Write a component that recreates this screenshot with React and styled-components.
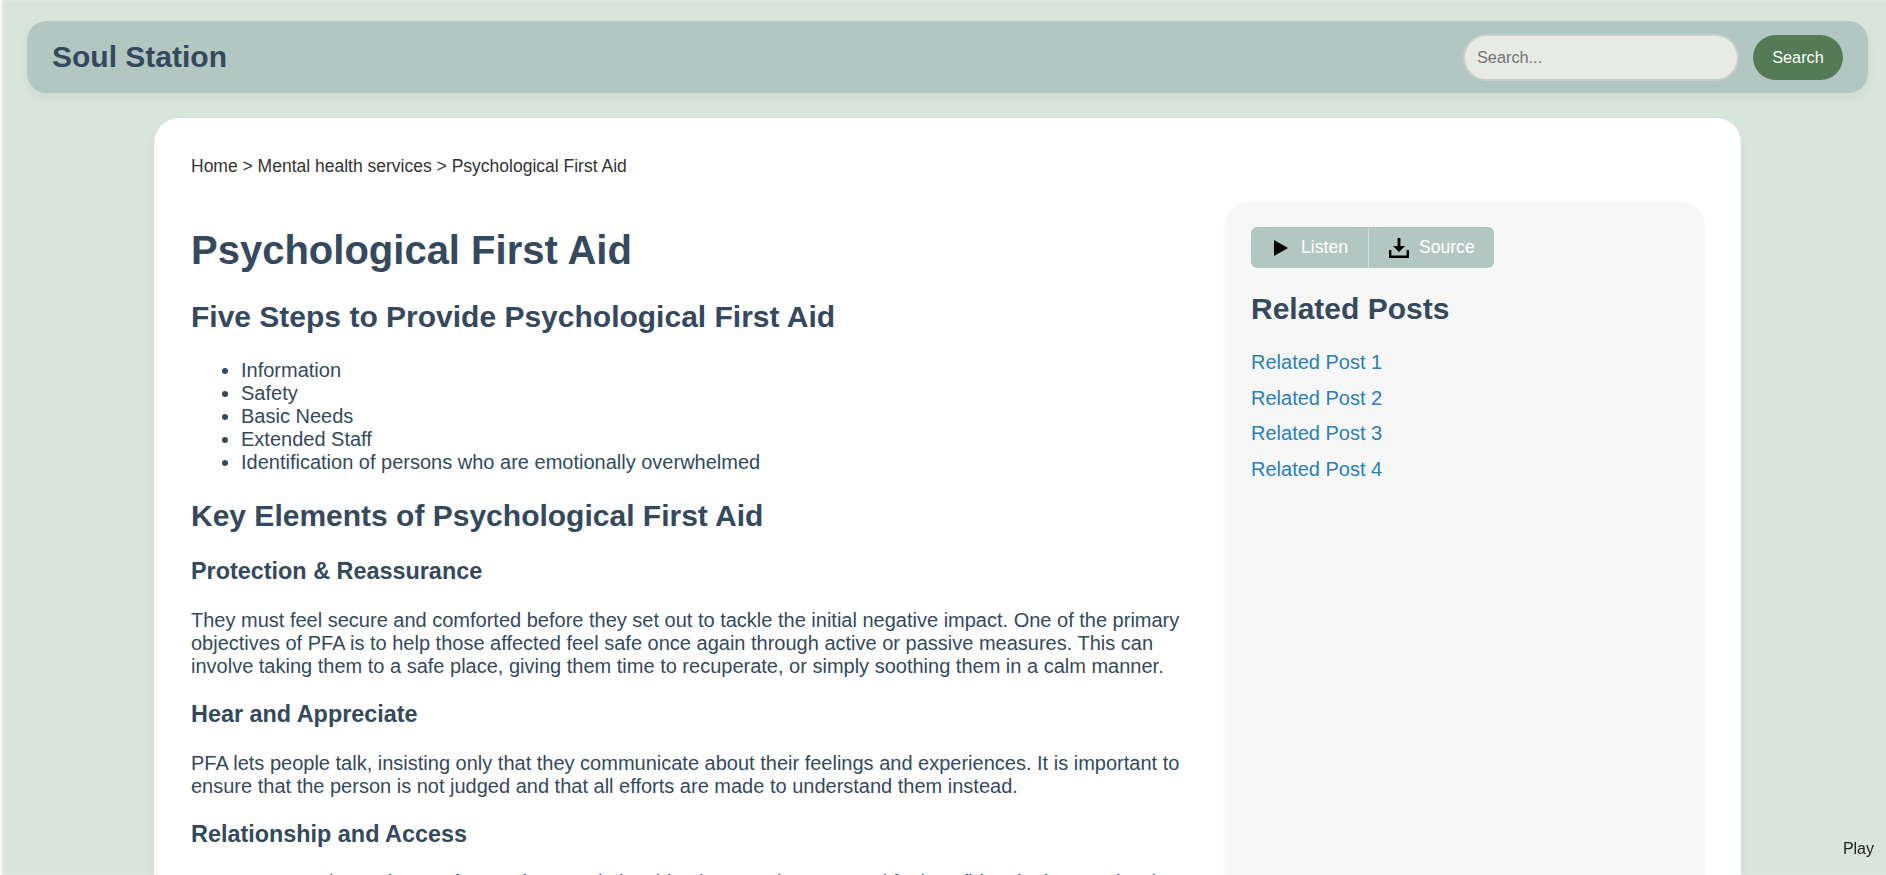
import styled, { createGlobalStyle } from "styled-components";

const GlobalStyle = createGlobalStyle`
  html, body {
    margin: 0;
    padding: 0;
    height: 875px;
    overflow: hidden;
    background: #d8e5dd;
  }
  body {
    font-family: "Liberation Sans", Arial, sans-serif;
    color: #34495e;
  }
`;

const Page = styled.div`
  height: 875px;
  overflow: hidden;
  padding: 21px 18px 0 27px;
  box-sizing: border-box;
  box-shadow: inset 3px 0 3px -1px #fff;
`;

const Navbar = styled.header`
  display: flex;
  align-items: center;
  justify-content: space-between;
  height: 72px;
  padding: 0 25px;
  box-sizing: border-box;
  background: #b2c7c1;
  border-radius: 20px;
  box-shadow: 0 4px 10px rgba(0, 0, 0, 0.06);
`;

const Logo = styled.div`
  font-size: 30px;
  font-weight: 700;
  color: #34495e;
`;

const SearchForm = styled.form`
  display: flex;
  align-items: center;
  gap: 14px;
`;

const SearchInput = styled.input`
  width: 276px;
  height: 47px;
  padding: 0 12px;
  box-sizing: border-box;
  border: 2px solid #c8cfcc;
  border-radius: 24px;
  background: #e8eae5;
  font: 16.3px "Liberation Sans", Arial, sans-serif;
  color: #34495e;
  &::placeholder {
    color: #757575;
  }
`;

const SearchButton = styled.button`
  width: 90px;
  height: 45px;
  border: 0;
  border-radius: 23px;
  background: #557a55;
  color: #fff;
  font: 16.3px "Liberation Sans", Arial, sans-serif;
`;

const Card = styled.main`
  width: 1587px;
  margin: 25px 0 0 127px;
  padding: 37px 36px 40px 37px;
  box-sizing: border-box;
  background: #fff;
  border-radius: 25px;
  box-shadow: 0 4px 10px rgba(0, 0, 0, 0.05);
`;

const Breadcrumb = styled.nav`
  font-size: 17.5px;
  line-height: 22px;
  color: #333;
`;

const Columns = styled.div`
  display: grid;
  grid-template-columns: 1fr 480px;
  column-gap: 30px;
  margin-top: 25px;
`;

const Article = styled.article`
  min-width: 0;
`;

const Title = styled.h1`
  margin: 25px 0 26.8px;
  font-size: 40px;
  line-height: 46px;
  font-weight: 700;
`;

const Section = styled.h2`
  margin: 24.9px 0;
  font-size: 30px;
  line-height: 34.5px;
  font-weight: 700;
`;

const Sub = styled.h3`
  margin: 23.4px 0;
  font-size: 23.4px;
  line-height: 27px;
  font-weight: 700;
`;

const Text = styled.p`
  margin: 20px 0;
  font-size: 20px;
  line-height: 23px;
`;

const Bullets = styled.ul`
  margin: 20px 0;
  padding-left: 50px;
  font-size: 20px;
  line-height: 23px;
`;

const Aside = styled.aside`
  padding: 25px 26px;
  min-height: 900px;
  box-sizing: border-box;
  background: #f7f7f7;
  border-radius: 25px;
  box-shadow: 0 0 6px rgba(0, 0, 0, 0.03);
`;

const ButtonGroup = styled.div`
  display: inline-flex;
  height: 41px;
  background: #b2c7c1;
  border-radius: 6px;
  overflow: hidden;
`;

const GroupButton = styled.button`
  display: flex;
  align-items: center;
  gap: ${(p) => p.$gap}px;
  height: 100%;
  padding: 0 ${(p) => p.$right}px 0 ${(p) => p.$left}px;
  border: 0;
  background: none;
  color: #fff;
  font: 17.6px "Liberation Sans", Arial, sans-serif;
  & + & {
    border-left: 1px solid #cfdcd8;
  }
  svg {
    flex: none;
  }
`;

const RelatedTitle = styled.h2`
  margin: 23px 0 25px;
  font-size: 30px;
  line-height: 35px;
  font-weight: 700;
`;

const RelatedList = styled.ul`
  list-style: none;
  margin: 0;
  padding: 0;
`;

const RelatedItem = styled.li`
  font-size: 20px;
  line-height: 23px;
  margin-bottom: 12.6px;
  a {
    color: #2980b9;
    text-decoration: none;
  }
`;

const PlayLabel = styled.div`
  position: fixed;
  right: 12px;
  bottom: 17px;
  font-size: 16px;
  color: #222;
`;

const PlayIcon = () => (
  <svg width="14" height="16" viewBox="0 0 14 16">
    <path d="M0 0 14 8 0 16z" fill="#000" />
  </svg>
);

const DownloadIcon = () => (
  <svg width="20" height="20" viewBox="0 0 20 20">
    <path d="M8.6 0h2.8v8H16l-6 6-6-6h4.6z" fill="#000" />
    <path d="M1.2 12v6.8h17.6V12" fill="none" stroke="#000" strokeWidth="2.4" />
  </svg>
);

const related = ["Related Post 1", "Related Post 2", "Related Post 3", "Related Post 4"];

export default function App() {
  return (
    <>
      <GlobalStyle />
      <Page>
        <Navbar>
          <Logo>Soul Station</Logo>
          <SearchForm onSubmit={(e) => e.preventDefault()}>
            <SearchInput placeholder="Search..." />
            <SearchButton>Search</SearchButton>
          </SearchForm>
        </Navbar>
        <Card>
          <Breadcrumb>Home &gt; Mental health services &gt; Psychological First Aid</Breadcrumb>
          <Columns>
            <Article>
              <Title>Psychological First Aid</Title>
              <Section>Five Steps to Provide Psychological First Aid</Section>
              <Bullets>
                <li>Information</li>
                <li>Safety</li>
                <li>Basic Needs</li>
                <li>Extended Staff</li>
                <li>Identification of persons who are emotionally overwhelmed</li>
              </Bullets>
              <Section>Key Elements of Psychological First Aid</Section>
              <Sub>Protection &amp; Reassurance</Sub>
              <Text>
                They must feel secure and comforted before they set out to tackle the initial negative impact. One of the primary objectives of PFA is to help those affected feel safe once again through active or passive measures. This can involve taking them to a safe place, giving them time to recuperate, or simply soothing them in a calm manner.
              </Text>
              <Sub>Hear and Appreciate</Sub>
              <Text>
                PFA lets people talk, insisting only that they communicate about their feelings and experiences. It is important to ensure that the person is not judged and that all efforts are made to understand them instead.
              </Text>
              <Sub>Relationship and Access</Sub>
              <Text>
                To ensure people can have a free and easy relationship, they need to trust and feel confident in the people who are there to help them through difficult times.
              </Text>
            </Article>
            <Aside>
              <ButtonGroup>
                <GroupButton $left={23} $right={20} $gap={13}>
                  <PlayIcon />
                  Listen
                </GroupButton>
                <GroupButton $left={20} $right={19} $gap={10}>
                  <DownloadIcon />
                  Source
                </GroupButton>
              </ButtonGroup>
              <RelatedTitle>Related Posts</RelatedTitle>
              <RelatedList>
                {related.map((r) => (
                  <RelatedItem key={r}>
                    <a href="#">{r}</a>
                  </RelatedItem>
                ))}
              </RelatedList>
            </Aside>
          </Columns>
        </Card>
      </Page>
      <PlayLabel>Play</PlayLabel>
    </>
  );
}
